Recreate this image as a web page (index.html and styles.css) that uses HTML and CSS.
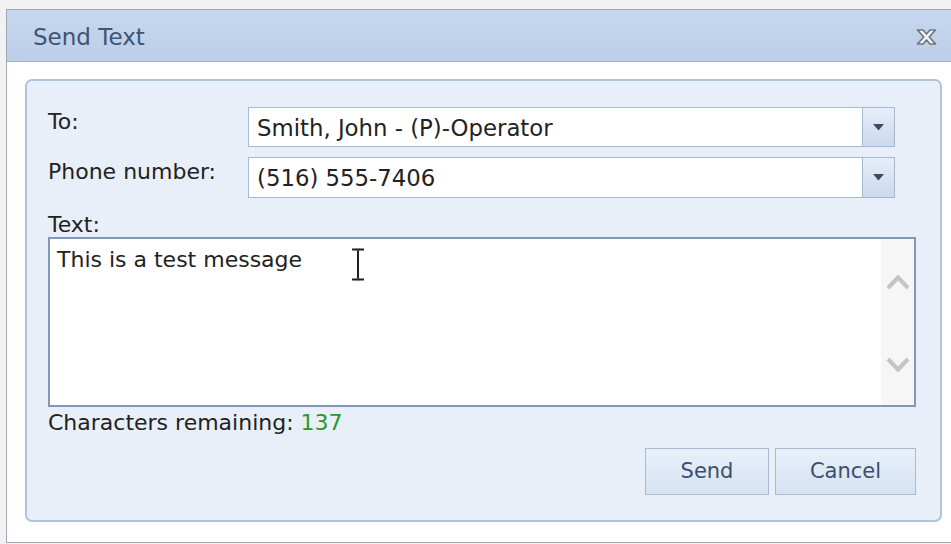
FILE: index.html
```html
<!DOCTYPE html>
<html lang="en">
<head>
<meta charset="utf-8">
<title>Send Text</title>
<link rel="stylesheet" href="styles.css">
</head>
<body>
<div class="dialog">
  <div class="titlebar">
    <span class="title">Send Text</span>
    <button class="close" aria-label="Close">
      <svg width="21" height="18" viewBox="0 0 21 18">
        <path d="M1.5 2 L7 2 L10.5 6 L14 2 L19.5 2 L13.2 9 L19.5 16 L14 16 L10.5 12 L7 16 L1.5 16 L7.8 9 Z" fill="#f4f6f9" stroke="#6f757d" stroke-width="1.7" stroke-linejoin="round"/>
      </svg>
    </button>
  </div>
  <div class="body">
    <div class="panel">
      <div class="row">
        <label class="label">To:</label>
        <div class="combo">
          <span class="combo-value">Smith, John - (P)-Operator</span>
          <span class="combo-btn"><svg width="11" height="7" viewBox="0 0 11 7"><path d="M0 0 H11 L5.5 6.5 Z" fill="#3b4b68"/></svg></span>
        </div>
      </div>
      <div class="row">
        <label class="label">Phone number:</label>
        <div class="combo tall">
          <span class="combo-value">(516) 555-7406</span>
          <span class="combo-btn"><svg width="11" height="7" viewBox="0 0 11 7"><path d="M0 0 H11 L5.5 6.5 Z" fill="#3b4b68"/></svg></span>
        </div>
      </div>
      <div class="label text-label">Text:</div>
      <div class="textbox">
        <div class="textbox-content">This is a test message</div>
        <div class="scroll">
          <svg width="24" height="18" viewBox="0 0 24 18"><path d="M2 15 L12 4.5 L22 15" fill="none" stroke="#c4c4c4" stroke-width="4"/></svg>
          <svg width="24" height="18" viewBox="0 0 24 18"><path d="M2 3 L12 13.5 L22 3" fill="none" stroke="#c4c4c4" stroke-width="4"/></svg>
        </div>
        <svg class="ibeam" width="16" height="33" viewBox="0 0 16 33">
          <path d="M2 1.5 H7 M9 1.5 H14 M2 31.5 H7 M9 31.5 H14 M8 2.5 V30.5" fill="none" stroke="#1e1e1e" stroke-width="2"/>
          <path d="M6.5 1.5 H9.5 M6.5 31.5 H9.5" stroke="#1e1e1e" stroke-width="2"/>
        </svg>
      </div>
      <div class="remaining">Characters remaining: <span class="count">137</span></div>
      <div class="actions">
        <button class="btn send">Send</button>
        <button class="btn cancel">Cancel</button>
      </div>
    </div>
  </div>
</div>
</body>
</html>
```

FILE: styles.css
```css
html, body {
  margin: 0;
  padding: 0;
}

body {
  width: 951px;
  height: 544px;
  overflow: hidden;
  background: #f2f2f2;
  font-family: "DejaVu Sans", Verdana, sans-serif;
  font-size: 22px;
  color: #222;
}

.dialog {
  margin: 9px 0 0 6px;
  width: 960px;
  height: 532px;
  border: 1px solid #9ea7b3;
  border-right: none;
  background: #fff;
  display: flex;
  flex-direction: column;
}

.titlebar {
  height: 52px;
  flex: none;
  box-sizing: border-box;
  background: linear-gradient(#c6d7ee, #bccfe8);
  border-bottom: 1px solid #a2b5cf;
  display: flex;
  align-items: center;
  padding: 0 0 0 26px;
}

.title {
  font-size: 23px;
  color: #3d5474;
  flex: 1;
  padding-top: 3px;
}

.close {
  border: none;
  background: none;
  padding: 0;
  margin-right: 30px;
  margin-top: 3px;
  width: 21px;
  height: 18px;
  display: flex;
  flex: none;
}

.body {
  flex: 1;
  padding: 17px 0 20px 18px;
  display: flex;
}

.panel {
  width: 917px;
  box-sizing: border-box;
  border: 2px solid #b2c4dc;
  border-radius: 7px;
  background: #e9eff9;
  padding: 26px 0 0 21px;
  display: flex;
  flex-direction: column;
}

.row {
  display: flex;
  align-items: flex-start;
  margin-bottom: 10px;
}

.label {
  width: 200px;
  flex: none;
  padding-top: 3px;
  line-height: 24px;
}

.combo {
  width: 647px;
  height: 40px;
  box-sizing: border-box;
  border: 1px solid #a7b9d1;
  background: #fff;
  display: flex;
  align-items: stretch;
}

.combo.tall {
  height: 41px;
}

.combo-value {
  flex: 1;
  padding-left: 8px;
  display: flex;
  align-items: center;
  font-size: 22.8px;
  padding-top: 1px;
}

.combo-btn {
  width: 31px;
  flex: none;
  border-left: 1px solid #a7b9d1;
  background: linear-gradient(#e7eef8, #cad9ec);
  display: flex;
  align-items: center;
  justify-content: center;
}

.text-label {
  padding-top: 6px;
  height: 22px;
  line-height: 22px;
  margin-bottom: 1px;
}

.textbox {
  position: relative;
  width: 868px;
  height: 170px;
  box-sizing: border-box;
  border: 2px solid #8398b9;
  background: #fff;
  display: flex;
}

.textbox-content {
  flex: 1;
  padding: 9px 0 0 7px;
  line-height: 24px;
}

.scroll {
  width: 33px;
  flex: none;
  background: #f6f6f6;
  display: flex;
  flex-direction: column;
  align-items: center;
  justify-content: space-between;
  padding: 34px 0 31px;
  box-sizing: border-box;
}

.ibeam {
  position: absolute;
  left: 300px;
  top: 9px;
}

.remaining {
  margin-top: 4px;
  line-height: 24px;
}

.count {
  color: #259a25;
}

.actions {
  display: flex;
  justify-content: flex-end;
  gap: 6px;
  width: 868px;
  margin-top: 13px;
}

.btn {
  height: 47px;
  box-sizing: border-box;
  border: 1px solid #a8bbd4;
  background: linear-gradient(#e8eff9, #d6e3f3);
  font-family: "DejaVu Sans", Verdana, sans-serif;
  font-size: 21px;
  color: #3b4f6e;
  padding: 0 0 2px;
}

.send {
  width: 124px;
}

.cancel {
  width: 141px;
}
```
